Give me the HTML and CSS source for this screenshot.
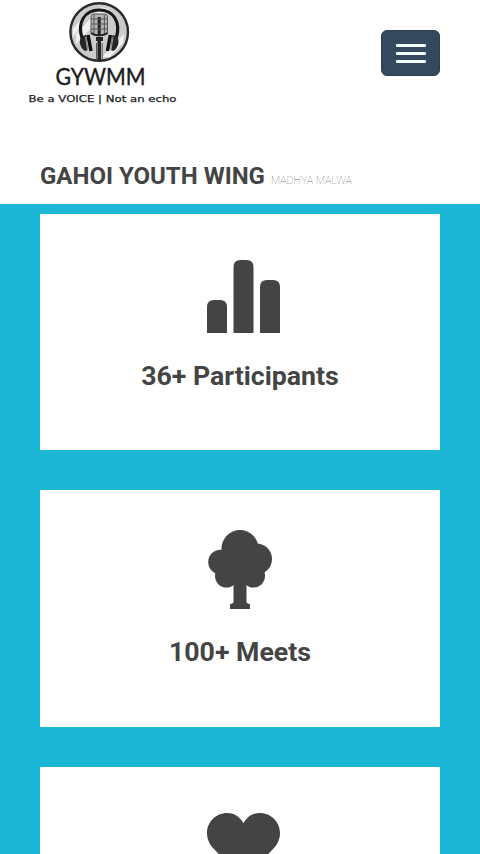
FILE: index.html
```html
<!DOCTYPE html>
<html lang="en">
<head>
  <meta charset="UTF-8">
  <meta name="viewport" content="width=device-width, initial-scale=1.0">
  <title>Gahoi Youth Wing</title>
  <link rel="stylesheet" href="styles.css">
</head>
<body>
  <header class="header">
    <a class="logo" href="#">
      <svg width="152" height="110" viewBox="26 0 152 110">
        <!-- badge -->
        <circle cx="99.2" cy="32" r="28.8" fill="#cbcbcb" stroke="#292929" stroke-width="2.4"/>
        <path d="M76 34L101 7l8 2-33 35zM102 57l22-23-1 9-13 14zM73 29l13-16 5-2-18 26z" fill="#f1f1f1"/>
        <!-- headphones -->
        <path d="M82 38c-5-16 3-28 17.200-28s22 12 17 28" fill="none" stroke="#171717" stroke-width="3.200"/>
        <path d="M82 36c-4 4-2 12 3 15l3-1-2-15zM116.400 36c4 4 2 12-3 15l-3-1 2-15z" fill="#252525"/>
        <path d="M88 35l3 16M110.400 35l-3 16" stroke="#111" stroke-width="3.500"/>
        <path d="M85.500 37l2 13M113 37l-2 13" stroke="#bbb" stroke-width=".8"/>
        <!-- microphone -->
        <rect x="91" y="14" width="16.500" height="21" rx="3" fill="#b4b4b4" stroke="#555" stroke-width="1"/>
        <path d="M99.200 17v18" stroke="#222" stroke-width="3"/>
        <path d="M91 19h16M91 24h16M91 29h16M94 15v19M104.400 15v19" stroke="#555" stroke-width="1"/>
        <path d="M91 33q8 5 16.500 0" fill="none" stroke="#222" stroke-width="2"/>
        <path d="M96 37h7v4h-2v19h-3.500V41H96z" fill="#222"/>
        <path d="M96.500 43v17M102.200 43v17" stroke="#555" stroke-width="1"/>
        <text class="logo-name" x="55.500" y="85" textLength="90" lengthAdjust="spacingAndGlyphs">GYWMM</text>
        <text class="logo-tag" x="28.500" y="102" textLength="148" lengthAdjust="spacingAndGlyphs">Be a VOICE | Not an echo</text>
      </svg>
    </a>
    <button class="menu-btn" type="button" aria-label="Menu">
      <span></span>
      <span></span>
      <span></span>
    </button>
  </header>

  <h1 class="title">GAHOI YOUTH WING <small>MADHYA MALWA</small></h1>

  <section class="stats">
    <div class="card">
      <svg class="icon" width="80" height="80" viewBox="0 0 80 80">
        <path d="M7 79V53q0-7 7-7h6q7 0 7 7v26zM33.500 79V13q0-7 7-7h6q7 0 7 7v66zM60 79V33q0-7 7-7h6q7 0 7 7v46z"/>
      </svg>
      <h2>36+ Participants</h2>
    </div>
    <div class="card">
      <svg class="icon" width="80" height="80" viewBox="0 0 80 80">
        <circle cx="40" cy="18.500" r="18.500"/>
        <circle cx="20.500" cy="32" r="12.300"/>
        <circle cx="56.500" cy="29" r="15.500"/>
        <circle cx="26.500" cy="46" r="11.500"/>
        <circle cx="53.500" cy="46" r="11.500"/>
        <path d="M22 22h34v27H22zM33.500 45h13v27q0 1.500 3.500 2v5H30v-5q3.500-.5 3.500-2z"/>
      </svg>
      <h2>100+ Meets</h2>
    </div>
    <div class="card">
      <svg class="icon" width="80" height="80" viewBox="0 0 80 80">
        <path d="M43.500 16C39 9 34 6 27 6 16 6 7 15 7 26c0 6 2.500 11.500 6.500 15.500L43.500 73l30-31.500C77.500 37.500 80 32 80 26 80 15 71 6 60 6c-7 0-12 3-16.500 10z"/>
      </svg>
    </div>
  </section>
</body>
</html>
```

FILE: styles.css
```css
* {
  margin: 0;
  padding: 0;
  box-sizing: border-box;
}
body {
  height: 100vh;
  overflow: hidden;
  background: #fff;
  color: #444;
  font-family: Roboto, sans-serif;
}

/* header */
.header {
  display: flex;
  justify-content: space-between;
  align-items: flex-start;
  height: 155px;
  padding: 0 40px 0 26px;
}
.logo svg {
  display: block;
}
.logo-name {
  font: 23px Lato, sans-serif;
  fill: #1c1c1c;
  stroke: #1c1c1c;
  stroke-width: .4;
}
.logo-tag {
  font: 9.5px "DejaVu Sans", sans-serif;
  fill: #222;
  stroke: #222;
  stroke-width: .25;
}
.menu-btn {
  display: flex;
  flex-direction: column;
  justify-content: center;
  align-items: center;
  gap: 5px;
  width: 59px;
  height: 46px;
  margin-top: 30px;
  background: #34495e;
  border: 1px solid #2c3e50;
  border-radius: 6px;
}
.menu-btn span {
  width: 30px;
  height: 3px;
  border-radius: 1px;
  background: #f4fbff;
}

.title {
  height: 49px;
  padding-left: 40px;
  font-size: 24px;
  font-weight: 700;
  line-height: 42px;
  white-space: nowrap;
}
.title small {
  font-size: 10.7px;
  font-weight: 100;
  color: #777;
}

/* cards */
.stats {
  display: flex;
  flex-direction: column;
  gap: 40px;
  padding: 10px 40px;
  background: #1cb6d7;
}
.card {
  display: flex;
  flex-direction: column;
  align-items: center;
  height: 236.3px;
  padding-top: 40px;
  background: #fff;
}
.card:first-child .icon,
.card:last-child .icon {
  overflow: visible;
}
.icon {
  display: block;
  fill: #444;
}
.card h2 {
  margin-top: 24px;
  font-size: 26.7px;
  font-weight: 700;
  line-height: 36px;
}
```
